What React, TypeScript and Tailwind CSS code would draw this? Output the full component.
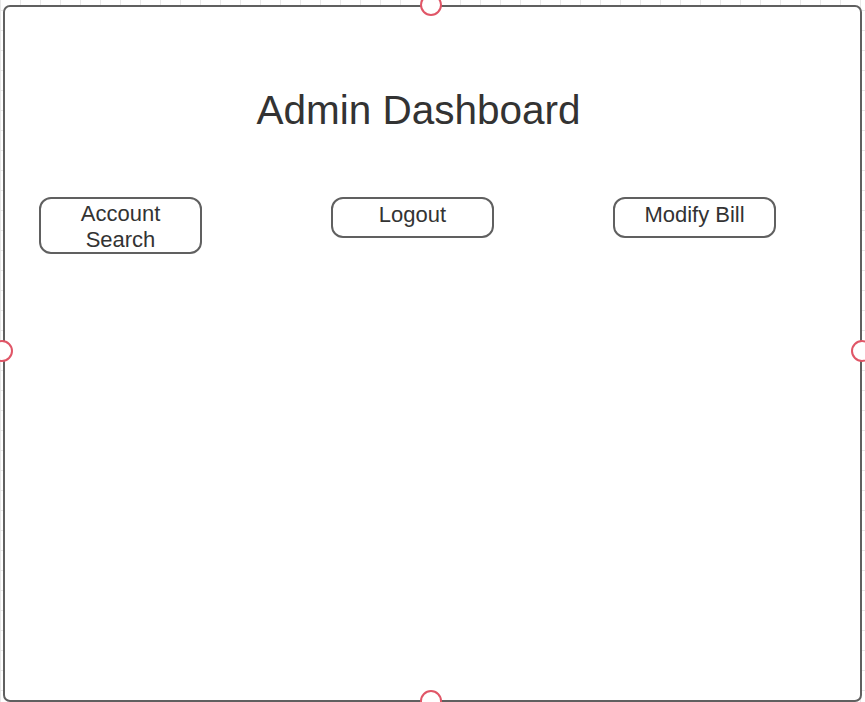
import React from 'react';

const Handle = ({ className }: { className: string }) => (
  <div
    className={`absolute w-[22px] h-[22px] rounded-full bg-white border-[2.5px] border-[#e05667] ${className}`}
  />
);

const App = () => {
  return (
    <div className="w-[865px] h-[702px] overflow-hidden bg-white bg-[linear-gradient(to_right,#e8e8e8_1px,transparent_1px),linear-gradient(to_bottom,#e8e8e8_1px,transparent_1px)] bg-[size:20px_20px] bg-[position:0px_10px] font-['Liberation_Sans',Arial,sans-serif] text-[#333333]">
      <div className="relative ml-[3px] mt-[5px] w-[859px] h-[697px] border-2 border-[#606060] rounded-[7px] bg-white">
        <div className="flex justify-center pr-[28px] mt-[80px]">
          <h1 className="text-[40.5px] leading-[46px]">Admin Dashboard</h1>
        </div>

        <div className="flex items-start mt-[64px] ml-[34px] text-[22px] leading-[26px]">
          <button className="w-[163px] h-[57px] border-2 border-[#606060] rounded-[12px] pt-[2px] flex flex-col items-center">
            <span>Account</span>
            <span>Search</span>
          </button>
          <button className="ml-[129px] w-[163px] h-[41px] border-2 border-[#606060] rounded-[12px] pt-[3px] flex justify-center items-start">
            Logout
          </button>
          <button className="ml-[119px] w-[163px] h-[41px] border-2 border-[#606060] rounded-[12px] pt-[3px] flex justify-center items-start">
            Modify Bill
          </button>
        </div>

        <Handle className="left-[415px] top-[-13px]" />
        <Handle className="left-[-14px] top-[333px]" />
        <Handle className="left-[846px] top-[333px]" />
        <Handle className="left-[415px] top-[683px]" />
      </div>
    </div>
  );
};

export default App;
